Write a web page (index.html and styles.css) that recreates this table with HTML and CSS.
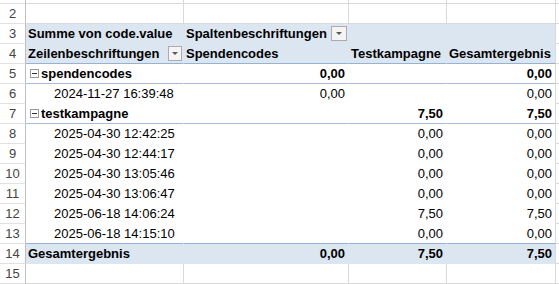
FILE: index.html
```html
<!DOCTYPE html>
<html lang="de">
<head>
<meta charset="utf-8">
<title>Pivot</title>
<link rel="stylesheet" href="styles.css">
</head>
<body>
<div class="sheet">
  <!-- row 1 (only its bottom edge is visible) -->
  <div class="c rh"></div><div class="c"></div><div class="c"></div><div class="c"></div><div class="c"></div><div class="c e"></div>
  <!-- row 2 -->
  <div class="c rh">2</div><div class="c"></div><div class="c"></div><div class="c"></div><div class="c"></div><div class="c e"></div>
  <!-- row 3 -->
  <div class="c rh">3</div>
  <div class="c pv blue b">Summe von code.value</div>
  <div class="c pv blue b flexcell"><span>Spaltenbeschriftungen</span><span class="dd"></span></div>
  <div class="c pv blue"></div>
  <div class="c pv blue last"></div>
  <div class="c e"></div>
  <!-- row 4 -->
  <div class="c rh">4</div>
  <div class="c pv blue b line flexcell"><span>Zeilenbeschriftungen</span><span class="dd narrow"></span></div>
  <div class="c pv blue b line">Spendencodes</div>
  <div class="c pv blue b line">Testkampagne</div>
  <div class="c pv blue b line last">Gesamtergebnis</div>
  <div class="c e"></div>
  <!-- row 5 -->
  <div class="c rh">5</div>
  <div class="c pv b sub grp"><span class="tog"></span>spendencodes</div>
  <div class="c pv b sub num">0,00</div>
  <div class="c pv sub"></div>
  <div class="c pv b sub num last">0,00</div>
  <div class="c e"></div>
  <!-- row 6 -->
  <div class="c rh">6</div>
  <div class="c pv item">2024-11-27 16:39:48</div>
  <div class="c pv num">0,00</div>
  <div class="c pv"></div>
  <div class="c pv num last">0,00</div>
  <div class="c e"></div>
  <!-- row 7 -->
  <div class="c rh">7</div>
  <div class="c pv b sub grp"><span class="tog"></span>testkampagne</div>
  <div class="c pv sub"></div>
  <div class="c pv b sub num">7,50</div>
  <div class="c pv b sub num last">7,50</div>
  <div class="c e"></div>
  <!-- row 8 -->
  <div class="c rh">8</div>
  <div class="c pv item">2025-04-30 12:42:25</div>
  <div class="c pv"></div>
  <div class="c pv num">0,00</div>
  <div class="c pv num last">0,00</div>
  <div class="c e"></div>
  <!-- row 9 -->
  <div class="c rh">9</div>
  <div class="c pv item">2025-04-30 12:44:17</div>
  <div class="c pv"></div>
  <div class="c pv num">0,00</div>
  <div class="c pv num last">0,00</div>
  <div class="c e"></div>
  <!-- row 10 -->
  <div class="c rh">10</div>
  <div class="c pv item">2025-04-30 13:05:46</div>
  <div class="c pv"></div>
  <div class="c pv num">0,00</div>
  <div class="c pv num last">0,00</div>
  <div class="c e"></div>
  <!-- row 11 -->
  <div class="c rh">11</div>
  <div class="c pv item">2025-04-30 13:06:47</div>
  <div class="c pv"></div>
  <div class="c pv num">0,00</div>
  <div class="c pv num last">0,00</div>
  <div class="c e"></div>
  <!-- row 12 -->
  <div class="c rh">12</div>
  <div class="c pv item">2025-06-18 14:06:24</div>
  <div class="c pv"></div>
  <div class="c pv num">7,50</div>
  <div class="c pv num last">7,50</div>
  <div class="c e"></div>
  <!-- row 13 -->
  <div class="c rh">13</div>
  <div class="c pv item line">2025-06-18 14:15:10</div>
  <div class="c pv line"></div>
  <div class="c pv num line">0,00</div>
  <div class="c pv num line last">0,00</div>
  <div class="c e"></div>
  <!-- row 14 -->
  <div class="c rh">14</div>
  <div class="c pv blue b">Gesamtergebnis</div>
  <div class="c pv blue b num">0,00</div>
  <div class="c pv blue b num">7,50</div>
  <div class="c pv blue b num last">7,50</div>
  <div class="c e"></div>
  <!-- row 15 -->
  <div class="c rh">15</div><div class="c"></div><div class="c"></div><div class="c"></div><div class="c"></div><div class="c e"></div>
</div>
</body>
</html>
```
FILE: styles.css
```css
html, body {
  margin: 0;
  padding: 0;
  background: #ffffff;
  overflow: hidden;
}

.sheet {
  display: grid;
  grid-template-columns: 26px 158px 165px 98px 109px 1fr;
  grid-auto-rows: 20px;
  margin-top: -16px;
  font-family: "Liberation Sans", Arial, sans-serif;
  font-size: 13px;
  line-height: 19px;
  color: #000000;
}

.c {
  box-sizing: border-box;
  border-right: 1px solid #d9d9d9;
  border-bottom: 1px solid #d9d9d9;
  padding: 0 2px;
  white-space: nowrap;
  overflow: hidden;
  background: #ffffff;
}

.rh {
  text-align: center;
  color: #444444;
  padding: 0;
  border-right-color: #bfbfbf;
  border-bottom-color: #e1e1e1;
}

.pv {
  border-right-color: transparent;
  border-bottom-color: transparent;
}

.pv.last {
  border-right-color: #d9d9d9;
}

.blue {
  background: #dce6f1;
}

.b {
  font-weight: bold;
}

.line {
  border-bottom-color: #95b3d7;
}

.sub {
  border-bottom-color: #a7bfdd;
}

.num {
  text-align: right;
  padding-right: 3px;
}

.item {
  padding-left: 28px;
}

.flexcell {
  display: flex;
  align-items: center;
  justify-content: space-between;
  padding-right: 1px;
}

.dd {
  box-sizing: border-box;
  width: 16px;
  height: 15px;
  border: 1px solid #acacac;
  background: #f4f4f4;
  display: flex;
  align-items: center;
  justify-content: center;
}

.dd.narrow {
  width: 14px;
}

.dd::after {
  content: "";
  width: 0;
  height: 0;
  border-left: 3px solid transparent;
  border-right: 3px solid transparent;
  border-top: 3px solid #595959;
}

.grp {
  display: flex;
  align-items: center;
  padding-left: 4px;
}

.tog {
  box-sizing: border-box;
  width: 9px;
  height: 9px;
  border: 1px solid #9a9a9a;
  background: #ffffff;
  margin-right: 2px;
  display: flex;
  align-items: center;
  justify-content: center;
}

.tog::after {
  content: "";
  width: 5px;
  height: 1px;
  background: #333333;
}
```
